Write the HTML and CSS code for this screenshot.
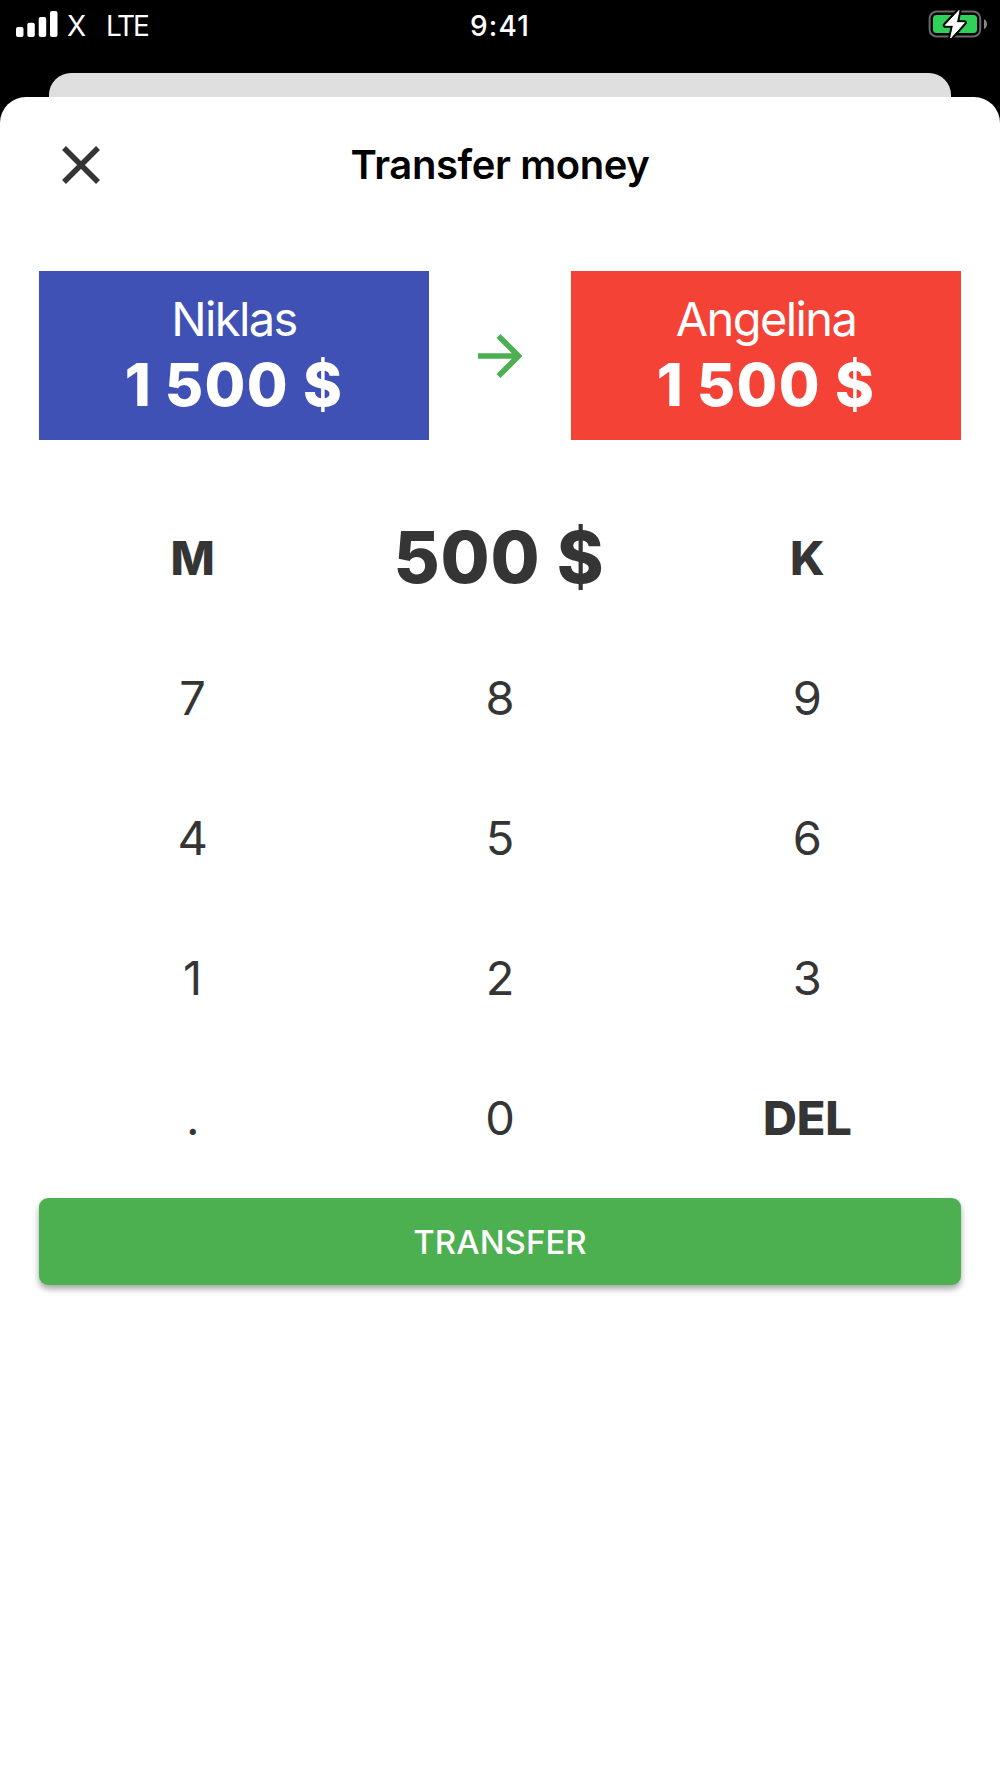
FILE: index.html
```
<!DOCTYPE html>
<html lang="en">
<head>
    <meta charset="UTF-8">
    <meta name="viewport" content="width=device-width, initial-scale=1.0">
    <title>Transfer money</title>
    <link rel="stylesheet" href="styles.css">
</head>
<body>
    <div class="status-bar">
        <div class="status-left">
            <svg class="signal" viewBox="0 0 42 26">
                <rect x="0" y="16" width="7.5" height="10" rx="2"/>
                <rect x="11.3" y="11.7" width="7.5" height="14.3" rx="2"/>
                <rect x="22.7" y="6" width="7.5" height="20" rx="2"/>
                <rect x="34" y="0" width="7.5" height="26" rx="2"/>
            </svg>
            <span class="carrier">X</span>
            <span class="network">LTE</span>
        </div>
        <div class="time">9:41</div>
        <div class="status-right">
            <svg class="battery" viewBox="0 0 60 30">
                <rect x="1.6" y="2.4" width="50.6" height="25.2" rx="7" fill="none" stroke="#6b696c" stroke-width="2"/>
                <rect x="5" y="6" width="44" height="18" rx="3.5" fill="#30d158"/>
                <path d="M56 10.3c1.8.8 3 2.700 3 4.900s-1.200 4-3 4.800z" fill="#8a888b"/>
                <path d="M31 1.500 17.300 16.300h8.200L22.600 29 36.400 13.700h-8z" fill="#000" stroke="#000" stroke-width="5" stroke-linejoin="round"/>
                <path d="M31 1.500 17.300 16.300h8.200L22.600 29 36.400 13.700h-8z" fill="#fff" stroke="#fff" stroke-width="1" stroke-linejoin="round"/>
            </svg>
        </div>
    </div>
    <div class="back-sheet"></div>
    <div class="sheet">
        <div class="header">
            <svg class="close" viewBox="0 0 38 38">
                <path d="M2 2 36 36M36 2 2 36"/>
            </svg>
            <h1>Transfer money</h1>
        </div>
        <div class="players">
            <div class="player blue">
                <div class="name">Niklas</div>
                <div class="balance">1<span class="thin"> </span>500 $</div>
            </div>
            <svg class="arrow" viewBox="0 0 44 44">
                <path d="M0 22H40M20.500 2 40.500 22 20.500 42"/>
            </svg>
            <div class="player red">
                <div class="name">Angelina</div>
                <div class="balance">1<span class="thin"> </span>500 $</div>
            </div>
        </div>
        <div class="keypad">
            <div class="key bold">M</div>
            <div class="amount">500 $</div>
            <div class="key bold">K</div>
            <div class="key">7</div>
            <div class="key">8</div>
            <div class="key">9</div>
            <div class="key">4</div>
            <div class="key">5</div>
            <div class="key">6</div>
            <div class="key">1</div>
            <div class="key">2</div>
            <div class="key">3</div>
            <div class="key">.</div>
            <div class="key">0</div>
            <div class="key bold">DEL</div>
        </div>
        <button class="transfer">TRANSFER</button>
    </div>
</body>
</html>
```
FILE: styles.css
```
* {
    box-sizing: border-box;
}
body {
    margin: 0;
    background-color: #000;
    font-family: Inter, "Liberation Sans", sans-serif;
    color: #353535;
    height: 1778px;
    display: flex;
    flex-direction: column;
}
.status-bar {
    display: grid;
    grid-template-columns: 1fr auto 1fr;
    height: 73px;
    padding: 0 13px 0 16px;
    color: #fff;
    font-size: 28px;
    line-height: 52px;
}
.status-left {
    display: flex;
    align-items: flex-start;
}
.signal {
    width: 42px;
    height: 26px;
    margin-top: 11px;
    fill: #fff;
}
.carrier {
    margin-left: 9px;
    font-weight: 400;
}
.network {
    margin-left: 20px;
    font-weight: 400;
    letter-spacing: -2.2px;
}
.time {
    margin-right: 3px;
    font-weight: 500;
    letter-spacing: 1.2px;
}
.status-right {
    display: flex;
    justify-content: flex-end;
}
.battery {
    width: 60px;
    height: 30px;
    margin-top: 9px;
    margin-right: -1px;
}
.back-sheet {
    height: 24px;
    margin: 0 49px;
    background-color: #dfdfdf;
    border-radius: 22px 22px 0 0;
}
.sheet {
    flex: 1;
    padding: 0 39px;
    background-color: #fff;
    border-radius: 26px 26px 0 0;
}
.header {
    display: grid;
    grid-template-columns: 84px 1fr 84px;
    align-items: center;
    height: 135px;
}
.close {
    width: 38px;
    height: 38px;
    margin-left: 23px;
    fill: none;
    stroke: #353535;
    stroke-width: 5.5;
}
h1 {
    margin: 0;
    color: #000;
    font-size: 40px;
    font-weight: 600;
    letter-spacing: -0.4px;
    text-align: center;
}
.players {
    display: flex;
    align-items: center;
    justify-content: space-between;
    margin-top: 39px;
}
.player {
    width: 390px;
    height: 169px;
    padding-top: 18px;
    color: #fff;
    text-align: center;
}
.blue {
    background-color: #3f51b5;
}
.red {
    background-color: #f44336;
}
.name {
    font-size: 47px;
    font-weight: 400;
    line-height: 60px;
    letter-spacing: -1.6px;
}
.balance {
    font-size: 59px;
    font-weight: 800;
    line-height: 71px;
    letter-spacing: 1.3px;
}
.thin {
    font-size: 52px;
}
.arrow {
    width: 44px;
    height: 44px;
    fill: none;
    stroke: #4caf50;
    stroke-width: 5.5;
}
.keypad {
    display: grid;
    grid-template-columns: repeat(3, 1fr);
    grid-auto-rows: 140px;
    align-items: center;
    margin-top: 47px;
    text-align: center;
}
.key {
    font-size: 47px;
    font-weight: 400;
}
.bold {
    font-weight: 800;
    letter-spacing: -0.2px;
}
.amount {
    font-size: 71px;
    font-weight: 800;
    letter-spacing: 0.8px;
    padding-right: 2px;
}
.transfer {
    display: block;
    width: 100%;
    height: 87px;
    margin-top: 11px;
    padding: 0;
    border: none;
    border-radius: 9px;
    background-color: #4caf50;
    box-shadow: 0 4px 6px rgba(0, 0, 0, 0.35);
    color: #fff;
    font-family: inherit;
    font-size: 33px;
    font-weight: 500;
}
```
